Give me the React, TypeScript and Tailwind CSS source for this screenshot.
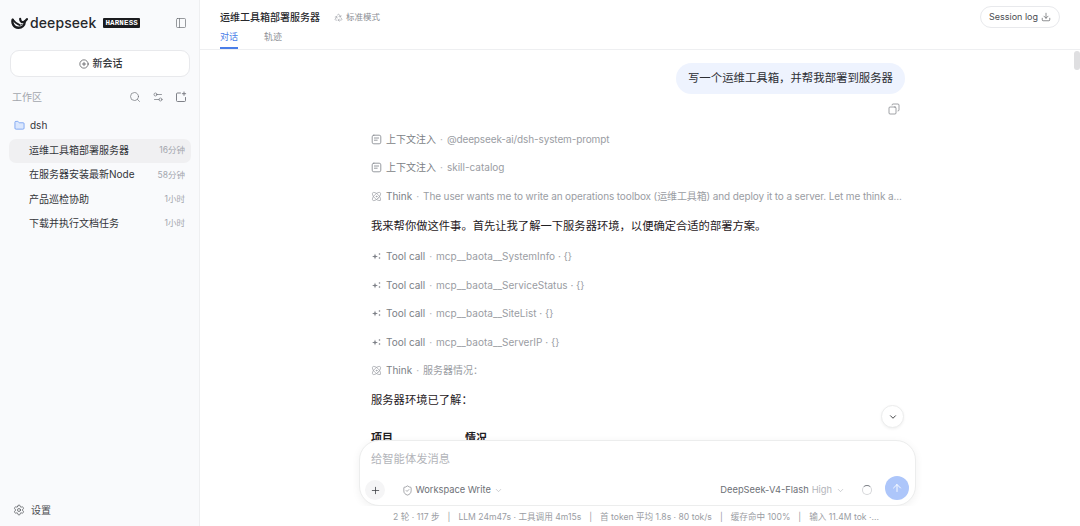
import { useState } from "react"
import {
  ArrowUp,
  Atom,
  ChevronDown,
  CirclePlus,
  Copy,
  Download,
  Folder,
  PanelLeft,
  Plus,
  Recycle,
  Search,
  Settings,
  Settings2,
  ShieldCheck,
} from "lucide-react"

const SESSIONS = [
  { title: "运维工具箱部署服务器", time: "16分钟", active: true },
  { title: "在服务器安装最新Node", time: "58分钟" },
  { title: "产品巡检协助", time: "1小时" },
  { title: "下载并执行文档任务", time: "1小时" },
]

function WhaleLogo() {
  return (
    <svg viewBox="0 0 20 14" className="h-[12px] w-[17px] shrink-0" fill="none" stroke="#1b1c1f" strokeLinecap="round">
      <path d="M2 3C.8 7 3 12.400 8.500 12.600 13 12.800 16 10 16.200 5.500" strokeWidth="2.800" />
      <path d="M2 3C4.500 6.500 7 8.600 10.500 9.500" strokeWidth="2" />
      <path d="M10.800 2.200C10.800 5 12.800 6.800 15 5.800 16.800 5 17.800 3.800 18.800 2.400" strokeWidth="2.600" />
      <circle cx="12.800" cy="9" r="0.900" fill="#1b1c1f" stroke="none" />
    </svg>
  )
}

function FolderAddIcon() {
  return (
    <svg viewBox="0 0 12 12" className="h-[12px] w-[12px]" fill="none" stroke="currentColor" strokeWidth="0.900" strokeLinecap="round" strokeLinejoin="round">
      <path d="M5.500 2H2.500A1 1 0 0 0 1.500 3v6.500a1 1 0 0 0 1 1h7a1 1 0 0 0 1-1V6.500" />
      <path d="M9 1v3.400M7.300 2.700h3.400" />
    </svg>
  )
}

function ContextIcon() {
  return (
    <svg viewBox="0 0 11 11" className="h-[11px] w-[11px] text-[#8b8e95]" fill="none" stroke="currentColor" strokeWidth="0.900" strokeLinecap="round">
      <rect x="1.200" y="1.200" width="8.600" height="8.600" rx="1.600" />
      <path d="M3.400 4h4.200M3.400 6.200h2.800" />
    </svg>
  )
}

function ToolIcon() {
  return (
    <svg viewBox="0 0 11 11" className="h-[11px] w-[11px] text-[#7c7f86]" fill="currentColor">
      <path d="M4 2.500 4.700 4.800 7 5.500 4.700 6.200 4 8.500 3.300 6.200 1 5.500 3.300 4.800Z" />
      <circle cx="8.500" cy="3" r="0.800" />
      <circle cx="8.500" cy="7" r="0.800" />
    </svg>
  )
}

function SessionRow({ title, time, active }: { title: string; time: string; active?: boolean }) {
  return (
    <div
      className={`flex h-[24px] items-center justify-between rounded-[7px] pl-[20px] pr-[6px] ${
        active ? "bg-[#f0f0f2]" : ""
      }`}
    >
      <span className="text-[10px] text-[#33353a]">{title}</span>
      <span className="text-[8.5px] text-[#a3a6ad]">{time}</span>
    </div>
  )
}

function Sidebar() {
  return (
    <aside className="flex h-full w-[200px] shrink-0 flex-col border-r border-[#eeeff1] bg-[#f9fafc]">
      <div className="flex h-[46px] items-center justify-between pl-[11px] pr-[12px]">
        <div className="flex items-center gap-[2px]">
          <WhaleLogo />
          <span className="text-[14px] font-medium leading-none tracking-[0.1px] text-[#27282c]">deepseek</span>
          <span className="ml-[5px] rounded-[1px] bg-[#1b1c1f] px-[2px] font-['Liberation_Mono'] text-[7.5px] font-bold leading-[10px] tracking-[0.15px] text-white">
            HARNESS
          </span>
        </div>
        <PanelLeft className="h-[12px] w-[12px] text-[#6d7076]" strokeWidth={1.4} />
      </div>

      <button className="ml-[10px] mr-[9px] mt-[4px] flex h-[27px] items-center justify-center gap-[4px] rounded-[9px] border border-[#e8e9ec] bg-white pl-[1px] text-[10px] font-medium text-[#33353a]">
        <CirclePlus className="h-[10px] w-[10px]" strokeWidth={1.5} />
        新会话
      </button>

      <div className="mt-[10px] flex h-[20px] items-center justify-between pl-[12px] pr-[12px]">
        <span className="text-[10px] text-[#a3a6ad]">工作区</span>
        <div className="flex items-center gap-[11px] text-[#70737a]">
          <Search className="h-[12px] w-[12px]" strokeWidth={1.4} />
          <Settings2 className="h-[12px] w-[12px]" strokeWidth={1.4} />
          <FolderAddIcon />
        </div>
      </div>

      <div className="mt-[8px] flex h-[20px] items-center gap-[5px] pl-[14px]">
        <Folder className="h-[11px] w-[11px] fill-[#dbe7fd] text-[#5b8def]" strokeWidth={1.5} />
        <span className="text-[10px] text-[#33353a]">dsh</span>
      </div>

      <div className="mt-[3.500px] flex flex-col gap-[0.400px] pl-[9px] pr-[8px]">
        {SESSIONS.map((s) => (
          <SessionRow key={s.title} {...s} />
        ))}
      </div>

      <div className="mt-auto flex h-[32px] items-center gap-[6px] pl-[13px]">
        <Settings className="h-[12px] w-[12px] text-[#4b4d52]" strokeWidth={1.4} />
        <span className="text-[10px] text-[#4b4d52]">设置</span>
      </div>
    </aside>
  )
}

function TraceRow({
  icon,
  label,
  detail,
  tight,
}: {
  icon: React.ReactNode
  label: string
  detail: string
  tight?: boolean
}) {
  return (
    <div className="flex h-[28.500px] items-center whitespace-nowrap text-[10px] text-[#8b8e95]">
      <span className="flex w-[15px] shrink-0 items-center">{icon}</span>
      <span className="text-[#7c7f86]">{label}</span>
      <span className="mx-[4px] text-[#b5b7bc]">·</span>
      <span className={`text-[#9a9da3] ${tight ? "tracking-[-0.012em]" : ""}`}>{detail}</span>
    </div>
  )
}

const thinkIcon = <Atom className="h-[11px] w-[11px] text-[#8b8e95]" strokeWidth={1.3} />

function Conversation() {
  return (
    <div className="ml-[171px] w-[534px] pt-[13px]">
      <div className="flex justify-end">
        <div className="flex h-[31px] items-center rounded-[16px] bg-[#eef3fe] px-[12px] text-[11.400px] text-[#2c2e33]">
          写一个运维工具箱，并帮我部署到服务器
        </div>
      </div>
      <div className="mt-[9px] flex justify-end pr-[5px]">
        <Copy className="h-[12px] w-[12px] -scale-x-100 text-[#6d7076]" strokeWidth={1.3} />
      </div>

      <div className="mt-[10px]">
        <TraceRow icon={<ContextIcon />} label="上下文注入" detail="@deepseek-ai/dsh-system-prompt" tight />
        <TraceRow icon={<ContextIcon />} label="上下文注入" detail="skill-catalog" />
        <TraceRow
          icon={thinkIcon}
          label="Think"
          detail="The user wants me to write an operations toolbox (运维工具箱) and deploy it to a server. Let me think a..."
          tight
        />
      </div>

      <p className="mt-[7px] text-[11.300px] leading-[16px] text-[#1f2023]">
        我来帮你做这件事。首先让我了解一下服务器环境，以便确定合适的部署方案。
      </p>

      <div className="mt-[9px]">
        <TraceRow icon={<ToolIcon />} label="Tool call" detail="mcp__baota__SystemInfo · {}" />
        <TraceRow icon={<ToolIcon />} label="Tool call" detail="mcp__baota__ServiceStatus · {}" />
        <TraceRow icon={<ToolIcon />} label="Tool call" detail="mcp__baota__SiteList · {}" />
        <TraceRow icon={<ToolIcon />} label="Tool call" detail="mcp__baota__ServerIP · {}" />
        <TraceRow icon={thinkIcon} label="Think" detail="服务器情况：" />
      </div>

      <p className="mt-[7px] text-[11.300px] leading-[16px] text-[#1f2023]">服务器环境已了解：</p>

      <div className="mt-[22px] flex text-[11px] font-semibold leading-[16px] text-[#1f2023]">
        <span className="w-[94px]">项目</span>
        <span>情况</span>
      </div>
    </div>
  )
}

function Composer() {
  return (
    <div className="absolute bottom-[20px] left-[159px] flex h-[66px] w-[557px] flex-col rounded-[20px] border border-[#eceded] bg-white shadow-[0_2px_8px_rgba(0,0,0,0.06)]">
      <div className="pl-[11px] pt-[10px] text-[11.300px] leading-[16px] text-[#b3b5ba]">给智能体发消息</div>
      <div className="mt-auto flex items-end pb-[5px] pl-[5px] pr-[6px]">
        <button className="flex h-[20px] w-[20px] items-center justify-center rounded-full bg-[#f5f5f6] text-[#33353a]">
          <Plus className="h-[11px] w-[11px]" strokeWidth={1.6} />
        </button>
        <div className="mb-[3px] ml-[17px] flex items-center gap-[2.500px] text-[9.300px] leading-[14px] text-[#6d7076]">
          <ShieldCheck className="h-[11px] w-[11px]" strokeWidth={1.3} />
          Workspace Write
          <ChevronDown className="ml-[1px] h-[9px] w-[9px] text-[#a3a6ad]" strokeWidth={1.4} />
        </div>
        <div className="mb-[3px] ml-auto flex items-center gap-[3px] text-[9.300px] leading-[14px] text-[#6d7076]">
          DeepSeek-V4-Flash
          <span className="text-[#b3b5ba]">High</span>
          <ChevronDown className="ml-[1px] h-[9px] w-[9px] text-[#a3a6ad]" strokeWidth={1.4} />
        </div>
        <div className="mb-[5px] ml-[17px] h-[10px] w-[10px] rounded-full border border-[#d5d6d9] border-t-[#7c7f86]" />
        <button className="ml-[13px] flex h-[24px] w-[24px] items-center justify-center rounded-full bg-[#adc6fa] text-white">
          <ArrowUp className="h-[12px] w-[12px]" strokeWidth={1.8} />
        </button>
      </div>
    </div>
  )
}

export default function App() {
  const [tab, setTab] = useState("chat")

  return (
    <div className="flex h-[526px] w-[1080px] overflow-hidden bg-white font-['Inter','Noto_Sans_CJK_SC',sans-serif]">
      <Sidebar />
      <main className="flex min-w-0 flex-1 flex-col">
        <header className="flex h-[50px] shrink-0 justify-between border-b border-[#eeeff1] pl-[20px] pr-[20px]">
          <div>
            <div className="flex h-[34px] items-center">
              <span className="text-[10px] font-medium text-[#27282c]">运维工具箱部署服务器</span>
              <span className="ml-[14px] flex items-center gap-[3px] text-[8.500px] text-[#8b8e95]">
                <Recycle className="h-[9px] w-[9px]" strokeWidth={1.4} />
                标准模式
              </span>
            </div>
            <div className="flex gap-[26px] text-[9px]">
              <button
                onClick={() => setTab("chat")}
                className={`flex h-[15px] items-start border-b-2 leading-[6px] ${tab === "chat" ? "border-[#4a7ee8] text-[#4a7ee8]" : "border-transparent text-[#8b8e95]"}`}
              >
                对话
              </button>
              <button
                onClick={() => setTab("trace")}
                className={`flex h-[15px] items-start border-b-2 leading-[6px] ${tab === "trace" ? "border-[#4a7ee8] text-[#4a7ee8]" : "border-transparent text-[#8b8e95]"}`}
              >
                轨迹
              </button>
            </div>
          </div>
          <button className="mt-[6px] flex h-[22px] w-[80px] items-center justify-center gap-[3px] rounded-full border border-[#e8e9ec] text-[9px] text-[#4b4d52]">
            Session log
            <Download className="h-[10px] w-[10px]" strokeWidth={1.5} />
          </button>
        </header>

        <div className="relative min-h-0 flex-1 overflow-hidden">
          <Conversation />
          <div className="absolute right-0 top-[1px] h-[19px] w-[6px] rounded-full bg-[#dfdfe1]" />
          <button className="absolute left-[681px] top-[355px] flex h-[23px] w-[23px] items-center justify-center rounded-full border border-[#eceded] bg-white shadow-[0_1px_3px_rgba(0,0,0,0.06)]">
            <ChevronDown className="h-[10px] w-[10px] text-[#1f2023]" strokeWidth={2} />
          </button>
          <Composer />
          <div className="absolute inset-x-0 bottom-0 h-[20px] bg-white pr-[8px] pt-[5px] text-center text-[8.600px] leading-[12px] text-[#9a9da3]">
            <span>2 轮 · 117 步</span>
            <span className="mx-[8px]">|</span>
            <span>LLM 24m47s · 工具调用 4m15s</span>
            <span className="mx-[8px]">|</span>
            <span>首 token 平均 1.8s · 80 tok/s</span>
            <span className="mx-[8px]">|</span>
            <span>缓存命中 100%</span>
            <span className="mx-[8px]">|</span>
            <span>输入 11.4M tok ·...</span>
          </div>
        </div>
      </main>
    </div>
  )
}
